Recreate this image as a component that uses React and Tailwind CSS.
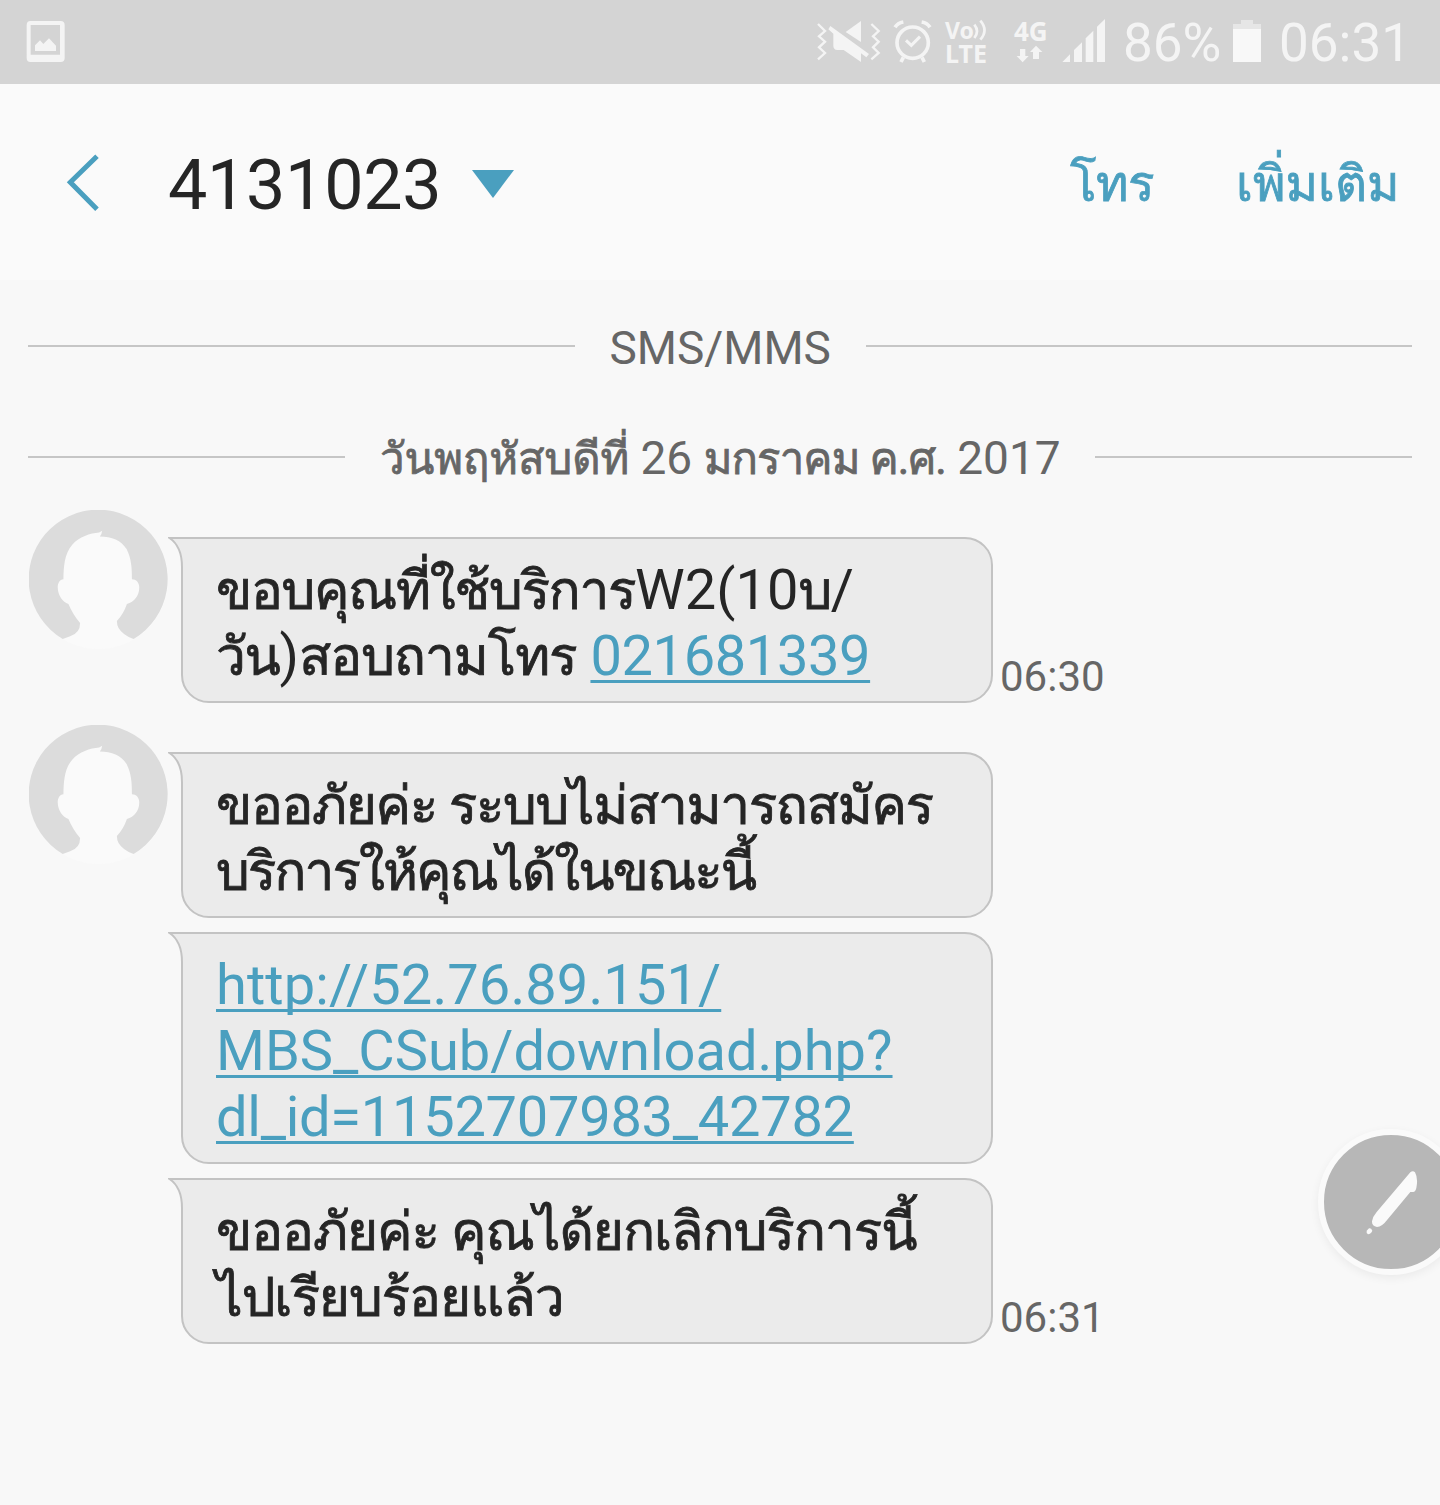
import clsx from "clsx";

const Line = ({ className, children }) => (
  <div className={clsx("h-[66px] leading-[66px] whitespace-nowrap", className)}>
    {children}
  </div>
);

const Thai = ({ className = "tracking-[-0.026em]", children }) => (
  <span
    className={clsx("text-[0.95em] [-webkit-text-stroke:0.8px]", className)}
  >
    {children}
  </span>
);

const Link = ({ className, children }) => (
  <span
    className={clsx(
      "text-[#4a9fbf] underline decoration-[3px] underline-offset-[5px] [text-decoration-skip-ink:none]",
      className
    )}
  >
    {children}
  </span>
);

const Avatar = () => (
  <svg
    viewBox="57 59 416 416"
    className="mt-px ml-px h-[139px] w-[139px] shrink-0"
  >
    <circle cx="265" cy="267" r="208" fill="#fafafa" />
    <path
      d="M158 445A208 208 0 1 1 370 445Q338 434 325 412Q320 402 320 391Q340 370 350 340C372 335 387 315 387 291C387 276 378 266 365 266C365 235 364 205 349 176C334 150 304 138 269 138Q275 131 276 121L267 126C240 128 207 139 187 162C162 190 161 230 160 266C149 267 143 277 143 290C143 314 158 335 175 340Q188 371 210 397Q210 427 180 437Z"
      fill="#dcdcdc"
    />
  </svg>
);

const Bubble = ({ className, children }) => (
  <div
    className={clsx(
      "relative w-[812px] shrink-0 rounded-[28px] rounded-tl-none border-2 border-[#c3c3c3] bg-[#ebebeb] px-[33px] pt-[18px] pb-[12px] text-[56px] text-[#252525]",
      className
    )}
  >
    <svg
      viewBox="0 0 16 30"
      className="absolute -top-[2px] -left-[15px] h-[30px] w-[16px]"
    >
      <path d="M0 0H16V30H13Z" fill="#f8f8f8" />
      <path d="M2 1C9 6 14 16 14 30H16V1Z" fill="#ebebeb" />
      <path
        d="M16 1H1.500C9 6 14 16 14 30"
        fill="none"
        stroke="#c3c3c3"
        strokeWidth="2"
      />
    </svg>
    {children}
  </div>
);

const Divider = ({ className, children }) => (
  <div className="flex h-[60px] items-center gap-[35px] px-7">
    <div className="h-[2px] flex-1 bg-[#c6c6c6]" />
    <div
      className={clsx(
        "pt-[3px] text-center text-[46px] leading-[60px] whitespace-nowrap text-[#666]",
        className
      )}
    >
      {children}
    </div>
    <div className="h-[2px] flex-1 bg-[#c6c6c6]" />
  </div>
);

const Time = ({ children }) => (
  <div className="mb-px ml-[7px] self-end text-[42px] leading-[50px] text-[#666]">
    {children}
  </div>
);

const StatusBar = () => (
  <div className="flex h-[84px] items-start bg-[#d4d4d4] text-[#f4f4f4]">
    <svg
      viewBox="78 60 120 130"
      className="mt-[20px] ml-[26px] h-[43.300px] w-[40px]"
      fill="currentColor"
    >
      <path
        fillRule="evenodd"
        d="M91 63H182Q194 63 194 75V174Q194 186 182 186H91Q80 186 80 174V75Q80 63 91 63ZM92 75V164H180V75Z"
      />
      <path d="M105 153V136L120 121L130 132L147 115L168 137V153Z" />
    </svg>
    <svg
      viewBox="45 57 201 135"
      className="mt-[19px] ml-[749px] h-[45px] w-[67px]"
      fill="currentColor"
    >
      <path
        d="M54 72L75 93L57 109L75 125L57 142L75 159L54 178M214 72L236 93L219 109L236 125L219 142L236 159L214 178"
        fill="none"
        stroke="currentColor"
        strokeWidth="7"
      />
      <path d="M183 63V126L137 96Z" />
      <path d="M91 78L207 162L199 172L183 160V186L131 150H112Q100 149 100 137V101L85 88Z" />
    </svg>
    <svg
      viewBox="279 57 117 135"
      className="mt-[19px] ml-[11px] h-[45px] w-[39px]"
      fill="none"
      stroke="currentColor"
    >
      <circle cx="338" cy="128" r="47" strokeWidth="11" />
      <path
        d="M285 82Q293 69 310 66M390 82Q382 69 365 66M310 172L303 186M366 172L373 186"
        strokeWidth="11"
      />
      <path d="M318 121L334 136L360 110" strokeWidth="9" />
    </svg>
    <div className="mt-[19px] ml-[13px] w-[44px] font-['Noto_Sans'] font-bold">
      <div className="flex h-[23px]">
        <span className="w-[28px] text-[23px] leading-[23px]">Vo</span>
        <svg
          viewBox="519 60 42 66"
          className="h-[22px] w-[14px]"
          fill="none"
          stroke="currentColor"
          strokeWidth="8"
        >
          <path d="M523 77Q539 97 523 117M541 65Q566 94 541 122" />
        </svg>
      </div>
      <div className="text-[25px] leading-[22px]">LTE</div>
    </div>
    <div className="mt-[17px] ml-[25px] w-[39px] font-['Noto_Sans'] text-[26px] leading-[28px] font-bold">
      4G
      <svg
        viewBox="648 135 84 54"
        className="ml-[2px] h-[18px] w-[28px]"
        fill="currentColor"
      >
        <path d="M660 147H676V168H686L668 187L650 168H660ZM699 177H717V156H727L708 137L690 156H699Z" />
      </svg>
    </div>
    <svg
      viewBox="786 54 132 135"
      className="mt-[18px] ml-[9px] h-[45px] w-[44px]"
      fill="currentColor"
    >
      <path d="M787 186L810 163V186ZM822 186V150L846 127V186ZM857 186V115L880 92V186ZM891 186V80L915 57V186Z" />
    </svg>
    <div className="mt-[12px] ml-[17px] w-[105px] text-[53px] leading-[63px]">
      86%
    </div>
    <svg
      viewBox="399 60 84 126"
      className="mt-[20px] ml-[5px] h-[42px] w-[28px]"
    >
      <path d="M399 72H423V60H459V72H483V90H399Z" fill="#e6e6e6" />
      <path d="M399 87H483V186H399Z" fill="#f8f8f8" />
    </svg>
    <div className="mt-[12px] ml-[18px] text-[53px] leading-[63px]">06:31</div>
  </div>
);

const Header = () => (
  <div className="flex h-[196px] items-start bg-[#fafafa] text-[#4a9fbf]">
    <svg
      viewBox="78 72 102 174"
      className="mt-[70px] ml-[66px] h-[58px] w-[34px]"
    >
      <path
        d="M171 79L91 157L171 238"
        fill="none"
        stroke="currentColor"
        strokeWidth="15"
      />
    </svg>
    <div className="mt-[59px] ml-[68px] w-[278px] text-[70px] leading-[84px] tracking-[-0.3px] text-[#252525]">
      4131023
    </div>
    <svg
      viewBox="0 0 42 28"
      className="mt-[86px] ml-[26px] h-[28px] w-[42px]"
      fill="currentColor"
    >
      <path d="M0 0H42L21 28Z" />
    </svg>
    <div className="mt-[64px] ml-[556px] w-[82px] text-[52px] leading-[72px] whitespace-nowrap">
      <Thai className="tracking-[-0.6px]">โทร</Thai>
    </div>
    <div className="mt-[64px] ml-[84px] text-[52px] leading-[72px] whitespace-nowrap">
      <Thai className="tracking-normal">เพิ่มเติม</Thai>
    </div>
  </div>
);

export default function App() {
  return (
    <main className="relative h-[1505px] w-[1440px] overflow-hidden bg-[#f8f8f8] font-[Roboto,Loma,'Noto_Sans_Thai_Looped',sans-serif]">
      <StatusBar />
      <Header />
      <div className="pt-[36px]">
        <Divider className="w-[221px]">SMS/MMS</Divider>
      </div>
      <div className="pt-[51px]">
        <Divider className="w-[680px]">
          <Thai className="tracking-[-0.1px]">วันพฤหัสบดีที่</Thai> 26{" "}
          <Thai className="tracking-[-0.9px]">มกราคม ค.ศ.</Thai> 2017
        </Divider>
      </div>

      <div className="flex items-start pt-[22px] pl-[28px]">
        <Avatar />
        <Bubble className="mt-[28px] ml-[13px]">
          <Line>
            <Thai>ขอบคุณที่ใช้บริการ</Thai>W2(10<Thai>บ</Thai>/
          </Line>
          <Line>
            <Thai>วัน</Thai>)
            <Thai className="tracking-[-1.1px]">สอบถามโทร</Thai>{" "}
            <Link className="tracking-[-0.4px]">021681339</Link>
          </Line>
        </Bubble>
        <Time>06:30</Time>
      </div>

      <div className="flex items-start pt-[21px] pl-[28px]">
        <Avatar />
        <Bubble className="mt-[28px] ml-[13px]">
          <Line>
            <Thai>ขออภัยค่ะ ระบบไม่สามารถสมัคร</Thai>
          </Line>
          <Line>
            <Thai className="tracking-[-2px]">บริการให้คุณได้ในขณะนี้</Thai>
          </Line>
        </Bubble>
      </div>

      <div className="pt-[14px] pl-[181px]">
        <Bubble>
          <Line>
            <Link className="tracking-[0.1px]">http://52.76.89.151/</Link>
          </Line>
          <Line>
            <Link>MBS_CSub/download.php?</Link>
          </Line>
          <Line>
            <Link className="tracking-[-0.27px]">dl_id=1152707983_42782</Link>
          </Line>
        </Bubble>
      </div>

      <div className="flex items-start pt-[14px] pl-[181px]">
        <Bubble>
          <Line>
            <Thai className="tracking-[-1.1px]">
              ขออภัยค่ะ คุณได้ยกเลิกบริการนี้
            </Thai>
          </Line>
          <Line>
            <Thai className="tracking-[-1.1px]">ไปเรียบร้อยแล้ว</Thai>
          </Line>
        </Bubble>
        <Time>06:31</Time>
      </div>

      <button className="absolute top-[1129px] left-[1318px] flex h-[146px] w-[146px] items-center justify-center rounded-full border-[6px] border-[#fafafa] bg-[#b7b7b7] shadow-[0_3px_10px_rgba(0,0,0,0.06)]">
        <svg
          viewBox="228 180 156 195"
          className="ml-[2px] h-[65px] w-[52px]"
          fill="#fafafa"
        >
          <path d="M361 187Q369 180 375 187Q385 205 379 234Q376 247 368 246L361 246L293 328Q276 351 261 351Q245 348 246 334Q248 320 260 306Z" />
          <path d="M237 355Q244 354 247 362Q243 372 234 373Q228 369 230 362Z" />
        </svg>
      </button>
    </main>
  );
}
